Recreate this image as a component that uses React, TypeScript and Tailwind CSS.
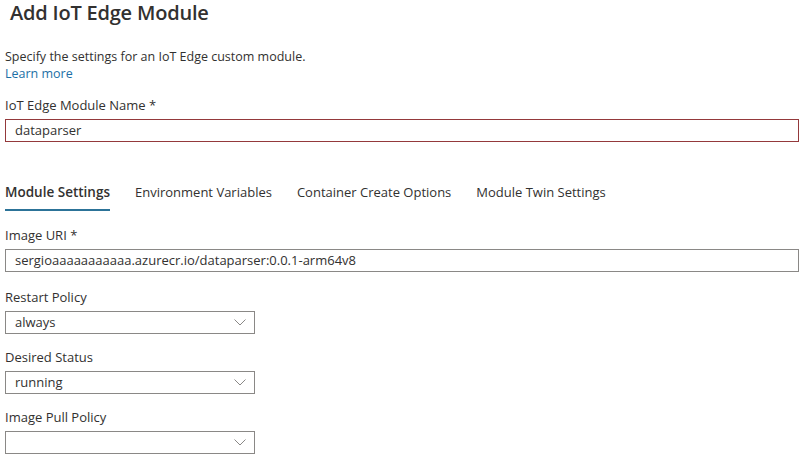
function Chevron() {
  return (
    <svg width="12" height="7" viewBox="0 0 12 7" fill="none" className="shrink-0">
      <path d="M0.5 0.5l5.5 5.5 5.5-5.5" stroke="#8a8886" strokeWidth="1" />
    </svg>
  );
}

function Label({ children }: { children: React.ReactNode }) {
  return <div className="text-[13px] leading-[18px] text-[#323130]">{children}</div>;
}

function Dropdown({ value }: { value: string }) {
  return (
    <div className="mt-[5px] flex h-[23px] w-[250px] items-center justify-between border border-[#8a8886] pl-[9px] pr-[8px] text-[13px] text-[#323130]">
      <span>{value}</span>
      <Chevron />
    </div>
  );
}

const tabs = ["Module Settings", "Environment Variables", "Container Create Options", "Module Twin Settings"];

export default function App() {
  return (
    <div
      className="h-[463px] w-[804px] overflow-hidden bg-white pl-[5px] pr-[5px] text-[#323130]"
      style={{ fontFamily: '"Open Sans", "Noto Sans", sans-serif' }}
    >
      <h1 className="ml-[5px] text-[20px] font-semibold leading-[26px] tracking-[-0.2px]">Add IoT Edge Module</h1>

      <p className="mt-[22px] text-[12.5px] leading-[17px]">Specify the settings for an IoT Edge custom module.</p>
      <a href="#" className="block text-[12.5px] leading-[18px] text-[#1c6fa6]">Learn more</a>

      <div className="mt-[13px]">
        <Label>IoT Edge Module Name *</Label>
        <div className="mt-[5px] flex h-[23px] items-center border border-[#94393b] pl-[9px] text-[13px]">dataparser</div>
      </div>

      <div className="mt-[40px] flex gap-[25px]">
        {tabs.map((t, i) => (
          <div key={t} className="flex flex-col">
            <span className={`leading-[20px] ${i === 0 ? "text-[13.5px] font-semibold" : "text-[13px]"}`}>{t}</span>
            <span className={`mt-[7px] h-[2px] ${i === 0 ? "bg-[#2c7398]" : "bg-transparent"}`} />
          </div>
        ))}
      </div>

      <div className="mt-[15px]">
        <Label>Image URI *</Label>
        <div className="mt-[5px] flex h-[23px] items-center border border-[#8a8886] pl-[9px] text-[13px]">
          sergioaaaaaaaaaaa.azurecr.io/dataparser:0.0.1-arm64v8
        </div>
      </div>

      <div className="mt-[16px]">
        <Label>Restart Policy</Label>
        <Dropdown value="always" />
      </div>
      <div className="mt-[14px]">
        <Label>Desired Status</Label>
        <Dropdown value="running" />
      </div>
      <div className="mt-[14px]">
        <Label>Image Pull Policy</Label>
        <Dropdown value="" />
      </div>
    </div>
  );
}
